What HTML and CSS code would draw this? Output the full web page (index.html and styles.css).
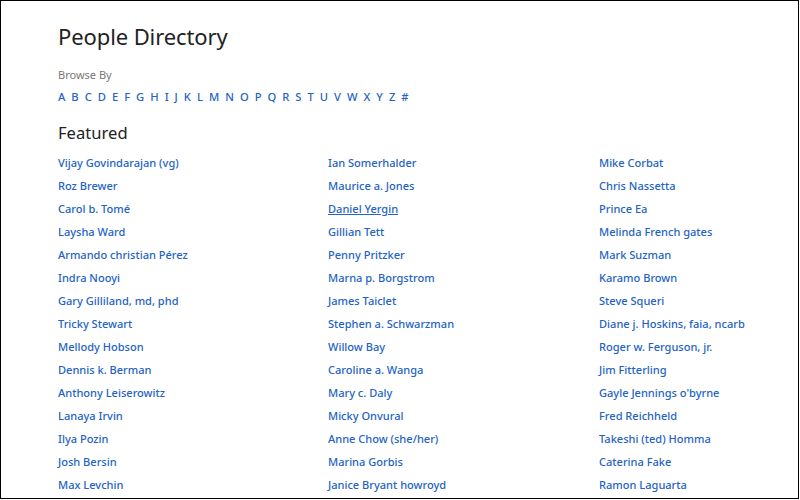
FILE: index.html
```html
<!DOCTYPE html>
<html>
<head>
<meta charset="utf-8">
<link rel="stylesheet" href="styles.css">
</head>
<body>
<div class="frame">
  <main class="page">
    <h1 class="title">People Directory</h1>
    <div class="browse-label">Browse By</div>
    <nav class="letters">
      <a>A</a><a>B</a><a>C</a><a>D</a><a>E</a><a>F</a><a>G</a><a>H</a><a>I</a><a>J</a><a>K</a><a>L</a><a>M</a><a>N</a><a>O</a><a>P</a><a>Q</a><a>R</a><a>S</a><a>T</a><a>U</a><a>V</a><a>W</a><a>X</a><a>Y</a><a>Z</a><a>#</a>
    </nav>
    <h2 class="section">Featured</h2>
    <div class="grid">
      <a>Vijay Govindarajan (vg)</a><a>Ian Somerhalder</a><a>Mike Corbat</a>
      <a>Roz Brewer</a><a>Maurice a. Jones</a><a>Chris Nassetta</a>
      <a>Carol b. Tomé</a><a class="hover">Daniel Yergin</a><a>Prince Ea</a>
      <a>Laysha Ward</a><a>Gillian Tett</a><a>Melinda French gates</a>
      <a>Armando christian Pérez</a><a>Penny Pritzker</a><a>Mark Suzman</a>
      <a>Indra Nooyi</a><a>Marna p. Borgstrom</a><a>Karamo Brown</a>
      <a>Gary Gilliland, md, phd</a><a>James Taiclet</a><a>Steve Squeri</a>
      <a>Tricky Stewart</a><a>Stephen a. Schwarzman</a><a>Diane j. Hoskins, faia, ncarb</a>
      <a>Mellody Hobson</a><a>Willow Bay</a><a>Roger w. Ferguson, jr.</a>
      <a>Dennis k. Berman</a><a>Caroline a. Wanga</a><a>Jim Fitterling</a>
      <a>Anthony Leiserowitz</a><a>Mary c. Daly</a><a>Gayle Jennings o'byrne</a>
      <a>Lanaya Irvin</a><a>Micky Onvural</a><a>Fred Reichheld</a>
      <a>Ilya Pozin</a><a>Anne Chow (she/her)</a><a>Takeshi (ted) Homma</a>
      <a>Josh Bersin</a><a>Marina Gorbis</a><a>Caterina Fake</a>
      <a>Max Levchin</a><a>Janice Bryant howroyd</a><a>Ramon Laguarta</a>
    </div>
  </main>
</div>
</body>
</html>
```

FILE: styles.css
```css
html, body {
  margin: 0;
  padding: 0;
  background: #fff;
}
.frame {
  box-sizing: border-box;
  width: 799px;
  height: 499px;
  border: 1px solid #000;
  overflow: hidden;
  font-family: "Noto Sans", "Open Sans", sans-serif;
}
.page {
  padding: 19px 0 0 57px;
}
.title {
  margin: 0;
  font-size: 22px;
  font-weight: 400;
  color: #222;
  line-height: 32px;
  letter-spacing: -0.1px;
}
.browse-label {
  margin-top: 15px;
  font-size: 11px;
  line-height: 16px;
  color: #777;
}
.letters {
  display: flex;
  gap: 6px;
  margin-top: 6px;
  font-size: 11.2px;
  font-weight: 500;
  line-height: 16px;
}
.letters a {
  color: #2463c4;
}
.section {
  margin: 16px 0 0;
  font-size: 16.6px;
  font-weight: 400;
  color: #222;
  line-height: 24px;
}
.grid {
  display: grid;
  grid-template-columns: 270px 271px 200px;
  grid-auto-rows: 23px;
  margin-top: 6px;
  font-size: 11.05px;
  font-weight: 500;
  line-height: 23px;
}
.grid a {
  color: #2463c4;
  white-space: nowrap;
}
.grid a.hover {
  text-decoration: underline;
}
```
